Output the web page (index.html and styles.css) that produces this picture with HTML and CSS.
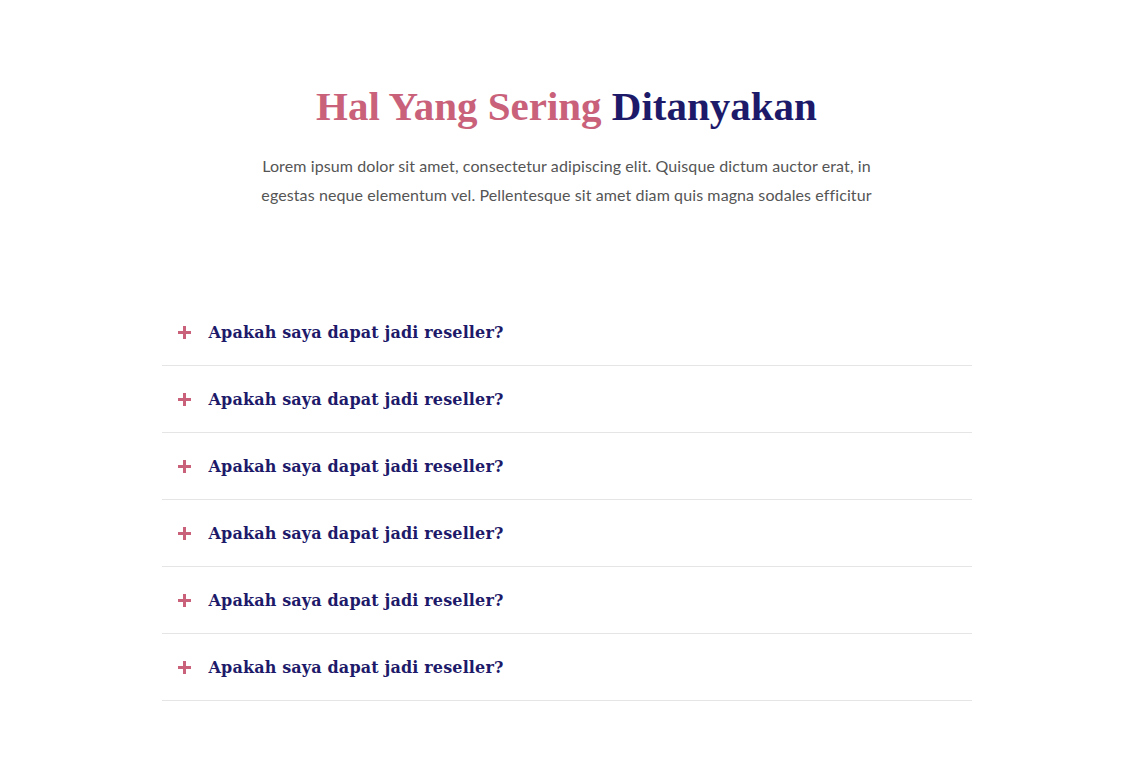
FILE: index.html
```html
<!DOCTYPE html>
<html>
<head>
<meta charset="utf-8">
<link rel="stylesheet" href="styles.css">
</head>
<body>
<section class="faq">
  <header class="faq-head">
    <h1 class="title"><span class="pink">Hal Yang Sering</span> <span class="navy">Ditanyakan</span></h1>
    <p class="lead">Lorem ipsum dolor sit amet, consectetur adipiscing elit. Quisque dictum auctor erat, in egestas neque elementum vel. Pellentesque sit amet diam quis magna sodales efficitur</p>
  </header>
  <ul class="list">
    <li class="item"><span class="plus"></span><span class="q">Apakah saya dapat jadi reseller?</span></li>
    <li class="item"><span class="plus"></span><span class="q">Apakah saya dapat jadi reseller?</span></li>
    <li class="item"><span class="plus"></span><span class="q">Apakah saya dapat jadi reseller?</span></li>
    <li class="item"><span class="plus"></span><span class="q">Apakah saya dapat jadi reseller?</span></li>
    <li class="item"><span class="plus"></span><span class="q">Apakah saya dapat jadi reseller?</span></li>
    <li class="item"><span class="plus"></span><span class="q">Apakah saya dapat jadi reseller?</span></li>
  </ul>
</section>
</body>
</html>
```
FILE: styles.css
```css
* { box-sizing: border-box; }
html, body { margin: 0; padding: 0; background: #fff; }
body { font-family: "Open Sans", sans-serif; }
.faq { width: 810px; margin: 0 auto; padding-top: 80px; }
.faq-head { display: flex; flex-direction: column; align-items: center; }
.title {
  margin: 0;
  font-family: "Liberation Serif", serif;
  font-weight: bold;
  font-size: 41px;
  line-height: 52px;
}
.pink { color: #c9617a; }
.navy { color: #1e1a6a; }
.lead {
  margin: 19px 0 0;
  width: 630px;
  text-align: center;
  font-family: "Lato", sans-serif;
  font-size: 16px;
  letter-spacing: 0.1px;
  line-height: 29px;
  color: #555;
}
.list { list-style: none; margin: 90px 0 0; padding: 0; }
.item {
  display: flex;
  align-items: center;
  height: 67px;
  border-bottom: 1px solid #e5e5e5;
  padding-left: 16px;
}
.plus {
  position: relative;
  width: 13px;
  height: 13px;
  margin-right: 18px;
}
.plus::before, .plus::after {
  content: "";
  position: absolute;
  background: #c9617a;
}
.plus::before { left: 0; right: 0; top: 5px; height: 3px; }
.plus::after { top: 0; bottom: 0; left: 5px; width: 3px; }
.q {
  font-family: "DejaVu Serif", serif;
  font-weight: bold;
  font-size: 16px;
  letter-spacing: 0.15px;
  color: #1e1a6a;
}
```
